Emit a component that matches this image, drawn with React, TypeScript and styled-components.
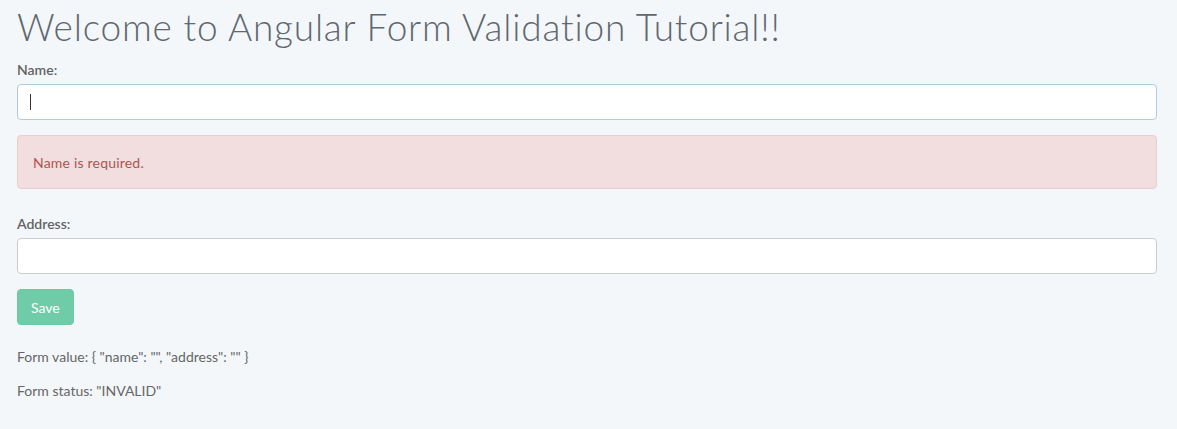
import React from 'react';
import styled, { createGlobalStyle } from 'styled-components';

const GlobalStyle = createGlobalStyle`
  html, body {
    margin: 0;
    padding: 0;
    background: #f3f7fa;
  }
  body {
    font-family: 'Lato', 'Open Sans', sans-serif;
    font-size: 14px;
    color: #555;
  }
`;

const Page = styled.div`
  padding: 0 20px 0 17px;
`;

const Title = styled.h1`
  margin: 0;
  padding-top: 5px;
  font-size: 37px;
  font-weight: 300;
  line-height: 44px;
  color: #5f6870;
  letter-spacing: 0.8px;
`;

const Group = styled.div`
  display: flex;
  flex-direction: column;
  margin-top: 11px;
`;

const Label = styled.label`
  font-size: 14px;
  font-weight: 600;
  color: #636363;
  line-height: 20px;
  margin-bottom: 4px;
`;

const Input = styled.input<{ $focused?: boolean }>`
  box-sizing: border-box;
  height: 36px;
  width: 100%;
  padding: 6px 12px;
  font-family: inherit;
  font-size: 14px;
  background: #fff;
  border: 1px solid ${(p) => (p.$focused ? '#aecbe0' : '#ccc')};
  border-radius: 4px;
  outline: none;
`;

const Alert = styled.div`
  box-sizing: border-box;
  margin-top: 15px;
  height: 54px;
  display: flex;
  align-items: center;
  padding: 0 15px;
  background: #f2dede;
  border: 1px solid #ebccd1;
  border-radius: 4px;
  color: #b05451;
  font-size: 14px;
  letter-spacing: 0.2px;
`;

const Spacer = styled.div`
  height: 25px;
`;

const Button = styled.button`
  margin-top: 15px;
  align-self: flex-start;
  height: 36px;
  padding: 0 13px;
  font-family: inherit;
  font-size: 14px;
  color: #fff;
  background: #70cba8;
  border: 1px solid #6bc9a4;
  border-radius: 4px;
`;

const Info = styled.p`
  margin: 0;
  font-size: 14px;
  line-height: 20px;
  color: #666;
`;

const InfoBlock = styled.div`
  display: flex;
  flex-direction: column;
  gap: 14px;
  margin-top: 22px;
`;

const Caret = styled.span`
  position: absolute;
  left: 13px;
  top: 10px;
  width: 1px;
  height: 16px;
  background: #333;
`;

const InputWrap = styled.div`
  position: relative;
`;

export default function App() {
  return (
    <Page>
      <GlobalStyle />
      <Title>Welcome to Angular Form Validation Tutorial!!</Title>
      <Group>
        <Label>Name:</Label>
        <InputWrap>
          <Input $focused readOnly />
          <Caret />
        </InputWrap>
        <Alert>Name is required.</Alert>
        <Spacer />
        <Label>Address:</Label>
        <Input readOnly />
        <Button>Save</Button>
      </Group>
      <InfoBlock>
        <Info>Form value: {'{ "name": "", "address": "" }'}</Info>
        <Info>Form status: "INVALID"</Info>
      </InfoBlock>
    </Page>
  );
}
